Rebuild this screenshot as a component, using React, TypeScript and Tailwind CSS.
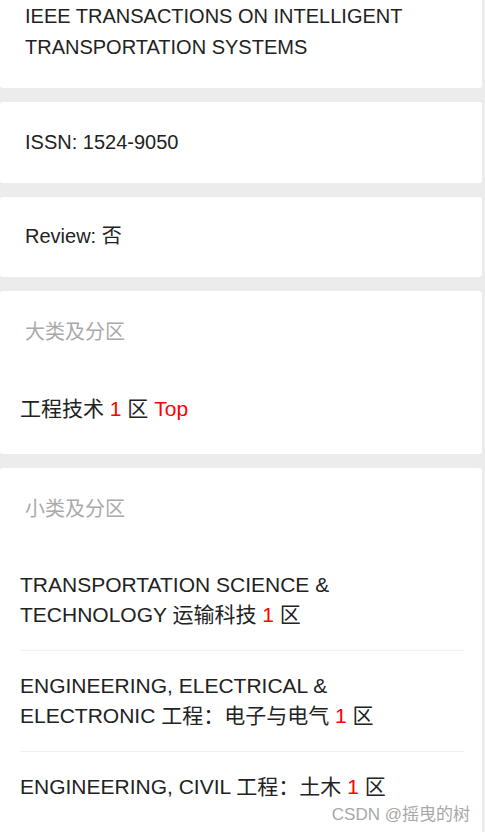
import React from "react";

const cn = '"Liberation Sans", Arial, "Noto Sans CJK SC", sans-serif';

const Red = ({ children }: { children: React.ReactNode }) => (
  <span className="text-[#ff0000]">{children}</span>
);

const subjects: { en: string; zh: string }[] = [
  { en: "TRANSPORTATION SCIENCE & TECHNOLOGY", zh: "运输科技" },
  { en: "ENGINEERING, ELECTRICAL & ELECTRONIC", zh: "工程：电子与电气" },
  { en: "ENGINEERING, CIVIL", zh: "工程：土木" },
];

export default function App() {
  return (
    <div
      className="relative h-[832px] overflow-hidden bg-[#ececec] text-[20px] leading-[31px] text-[#222]"
      style={{ fontFamily: cn }}
    >
      <div className="flex flex-col gap-[14px] pr-[3px]">
        <div className="rounded-b-[3px] bg-white pl-[25px] pr-5 pt-px pb-[25px]">
          IEEE TRANSACTIONS ON INTELLIGENT TRANSPORTATION SYSTEMS
        </div>

        <div className="rounded-[3px] bg-white px-[25px] py-[25px]">
          ISSN: 1524-9050
        </div>

        <div className="rounded-[3px] bg-white px-[25px] pt-[24px] pb-[25px]">
          Review: 否
        </div>

        <div className="rounded-[3px] bg-white pb-[10px]">
          <div className="pl-[25px] pt-[26px] text-[#aaa]">大类及分区</div>
          <div className="mt-[25px] px-5 py-5 text-[21px]">
            工程技术 <Red>1</Red> 区 <Red>Top</Red>
          </div>
        </div>

        <div className="rounded-t-[3px] bg-white pb-10">
          <div className="pl-[25px] pt-[26px] text-[#aaa]">小类及分区</div>
          <div className="mt-[25px] pl-5 pr-[18px] text-[21px] leading-[30px]">
            {subjects.map((s, i) => (
              <div
                key={s.zh}
                className={
                  "py-5 pr-[44px] " +
                  (i > 0 ? "border-t border-[#f0f0f0]" : "")
                }
              >
                {s.en} {s.zh} <Red>1</Red> 区
              </div>
            ))}
          </div>
        </div>
      </div>

      <div className="absolute right-[15px] bottom-[5px] text-[17px] leading-[24px] text-[#a8a8a8]">
        CSDN @摇曳的树
      </div>
    </div>
  );
}
